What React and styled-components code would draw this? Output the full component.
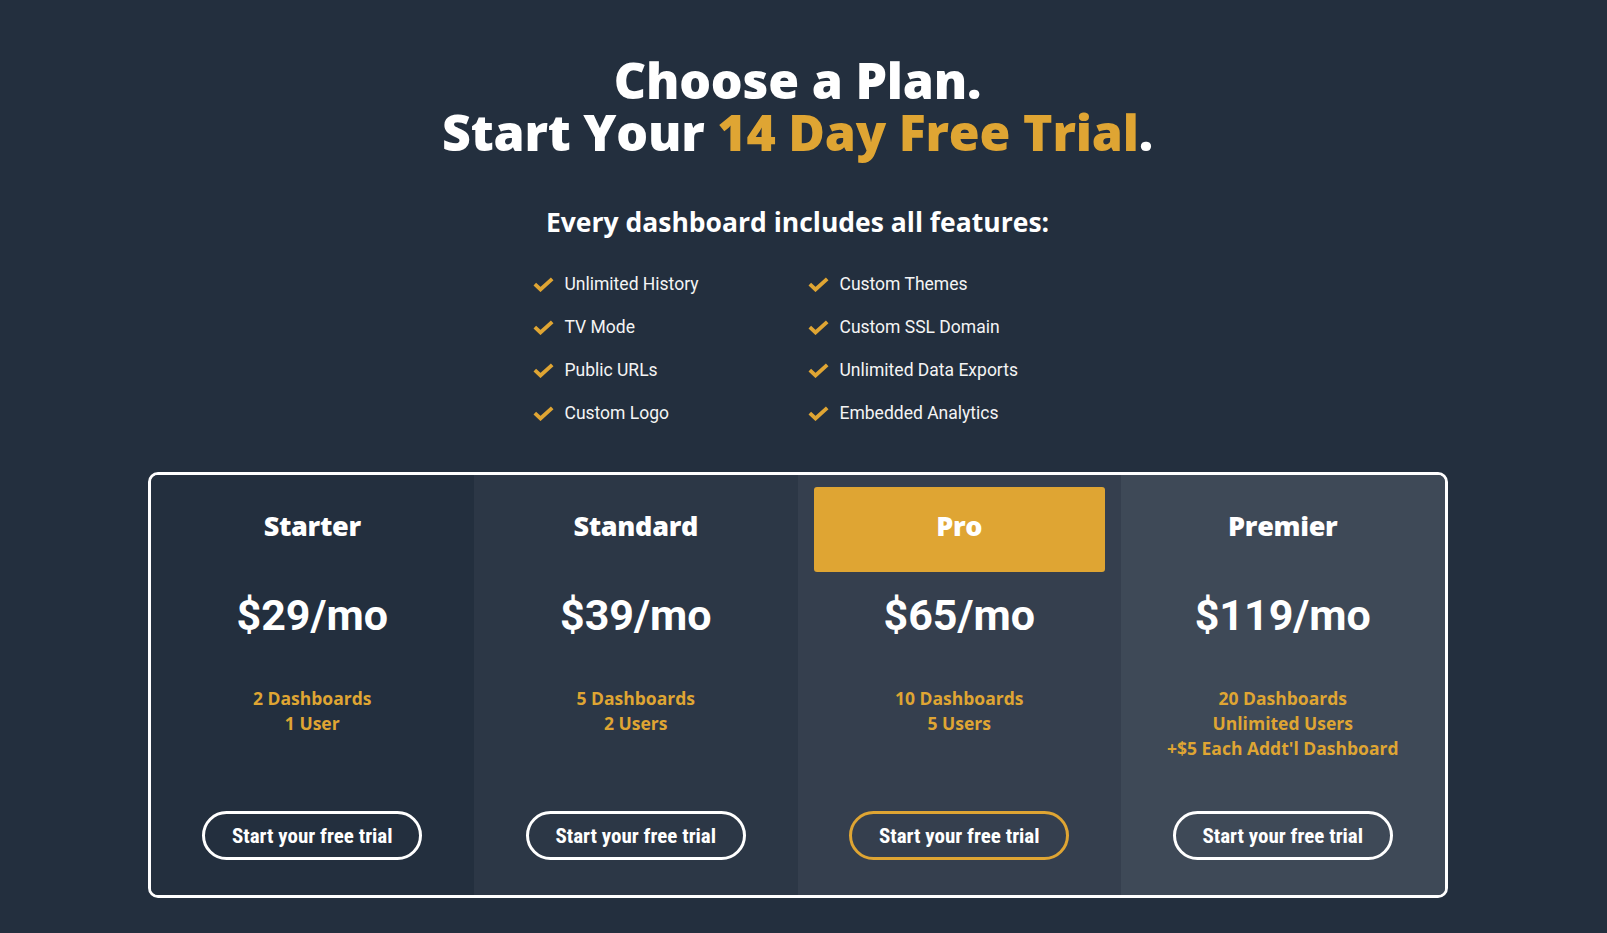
import React from "react";
import styled, { createGlobalStyle } from "styled-components";

const GlobalStyle = createGlobalStyle`
  body {
    margin: 0;
    background: #232f3e;
    font-family: "Open Sans", "Liberation Sans", sans-serif;
  }
`;

const ORANGE = "#dfa533";

const Page = styled.div`
  min-height: 933px;
  padding: 55px 12px 40px 0;
  box-sizing: border-box;
  display: flex;
  flex-direction: column;
  align-items: center;
  color: #fff;
`;

const Title = styled.h1`
  margin: 0;
  font-family: "Open Sans", sans-serif;
  font-weight: 800;
  font-size: 50px;
  line-height: 51px;
  text-align: center;
  letter-spacing: -0.2px;
`;

const TitleLine = styled.span`
  display: block;
  line-height: ${(p) => p.$lh || "51px"};
`;

const Accent = styled.span`
  color: ${ORANGE};
`;

const Subtitle = styled.h2`
  margin: 48px 0 0;
  font-family: "Open Sans", sans-serif;
  font-weight: 700;
  font-size: 26.5px;
  line-height: 32px;
  text-align: center;
`;

const FeatureGrid = styled.ul`
  list-style: none;
  margin: 34px 0 0;
  padding: 0;
  display: grid;
  grid-template-columns: 275px 255px;
  row-gap: 19px;
`;

const Feature = styled.li`
  display: flex;
  align-items: center;
  gap: 11px;
  height: 24px;
  font-family: Roboto, sans-serif;
  font-size: 17.5px;
  color: #f4f4f4;
`;

const Plans = styled.div`
  margin-top: 47px;
  width: 1300px;
  box-sizing: border-box;
  border: 3px solid #fff;
  border-radius: 10px;
  overflow: hidden;
  display: grid;
  grid-template-columns: repeat(4, 1fr);
`;

const Column = styled.div`
  background: ${(p) => p.$bg};
  display: flex;
  flex-direction: column;
  align-items: center;
  padding: 12px 16px 35px;
`;

const PlanHeader = styled.div`
  align-self: stretch;
  height: 85px;
  box-sizing: border-box;
  padding-bottom: 8px;
  border-radius: 3px;
  background: ${(p) => (p.$highlight ? ORANGE : "transparent")};
  display: flex;
  align-items: center;
  justify-content: center;
  font-family: "Open Sans", sans-serif;
  font-weight: 800;
  font-size: 27px;
  letter-spacing: -0.3px;
  color: #fff;
`;

const Price = styled.div`
  margin-top: 18px;
  font-family: Roboto, sans-serif;
  font-weight: 700;
  font-size: 43px;
  line-height: 50px;
`;

const Limits = styled.div`
  margin-top: 46px;
  min-height: 75px;
  font-family: "Open Sans", sans-serif;
  font-weight: 700;
  font-size: 17.5px;
  line-height: 25px;
  color: ${ORANGE};
  text-align: center;
`;

const TrialButton = styled.button`
  margin-top: 50px;
  width: 220px;
  height: 49px;
  box-sizing: border-box;
  border: 3px solid ${(p) => (p.$accent ? ORANGE : "#fff")};
  border-radius: 25px;
  background: transparent;
  color: #fff;
  font-family: "Roboto Condensed", "Liberation Sans Narrow", Roboto, sans-serif;
  font-weight: 700;
  font-size: 21px;
  cursor: pointer;
`;

const Check = () => (
  <svg width="21" height="15" viewBox="0 0 21 15" fill="none">
    <polyline
      points="1.8,7.2 7.5,12.5 19.2,1.8"
      stroke={ORANGE}
      strokeWidth="3.8"
      strokeLinejoin="miter"
    />
  </svg>
);

const features = [
  "Unlimited History",
  "Custom Themes",
  "TV Mode",
  "Custom SSL Domain",
  "Public URLs",
  "Unlimited Data Exports",
  "Custom Logo",
  "Embedded Analytics",
];

const plans = [
  { name: "Starter", price: "$29/mo", bg: "#232f3e", limits: ["2 Dashboards", "1 User"] },
  { name: "Standard", price: "$39/mo", bg: "#2c3746", limits: ["5 Dashboards", "2 Users"] },
  { name: "Pro", price: "$65/mo", bg: "#353f4e", limits: ["10 Dashboards", "5 Users"], pro: true },
  {
    name: "Premier",
    price: "$119/mo",
    bg: "#3e4957",
    limits: ["20 Dashboards", "Unlimited Users", "+$5 Each Addt'l Dashboard"],
  },
];

export default function App() {
  return (
    <>
      <GlobalStyle />
      <Page>
        <Title>
          <TitleLine>Choose a Plan.</TitleLine>
          <TitleLine $lh="52px">
            Start Your <Accent>14 Day Free Trial</Accent>.
          </TitleLine>
        </Title>
        <Subtitle>Every dashboard includes all features:</Subtitle>
        <FeatureGrid>
          {features.map((f) => (
            <Feature key={f}>
              <Check />
              {f}
            </Feature>
          ))}
        </FeatureGrid>
        <Plans>
          {plans.map((p) => (
            <Column key={p.name} $bg={p.bg}>
              <PlanHeader $highlight={p.pro}>{p.name}</PlanHeader>
              <Price>{p.price}</Price>
              <Limits>
                {p.limits.map((l) => (
                  <div key={l}>{l}</div>
                ))}
              </Limits>
              <TrialButton $accent={p.pro}>Start your free trial</TrialButton>
            </Column>
          ))}
        </Plans>
      </Page>
    </>
  );
}
